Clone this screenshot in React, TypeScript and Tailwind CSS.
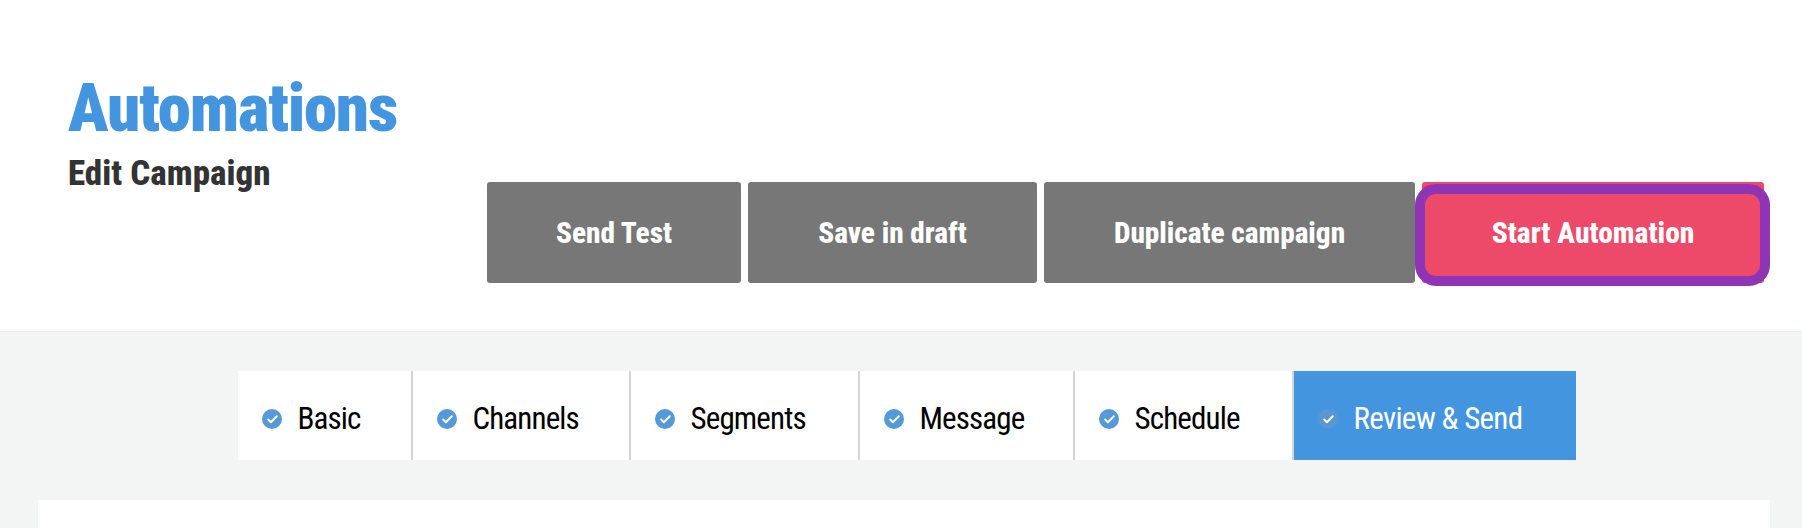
import { Check } from 'lucide-react'

const tabs = [
  { label: 'Basic', width: 'w-[175px]' },
  { label: 'Channels', width: 'w-[218px]' },
  { label: 'Segments', width: 'w-[229px]' },
  { label: 'Message', width: 'w-[215px]' },
  { label: 'Schedule', width: 'w-[219px]' },
]

function TabIcon({ active }: { active?: boolean }) {
  return (
    <span
      className={`w-5 h-5 rounded-full flex items-center justify-center shrink-0 ${
        active ? 'bg-[#5b96d3]' : 'bg-[#5599d8]'
      }`}
    >
      <Check size={13} strokeWidth={3.5} className="text-white" />
    </span>
  )
}

export default function App() {
  return (
    <div className="w-[1802px] h-[528px] overflow-hidden bg-[#f3f5f4] [font-family:Roboto,sans-serif] [font-stretch:75%]">
      {/* Header */}
      <div className="h-[332px] bg-white border-b border-[#eceeed] flex pl-[68px]">
        <div className="w-[419px] shrink-0 pt-[70px]">
          <h1 className="text-[67px] leading-[76px] font-black tracking-[-1.2px] text-[#4495e0]">Automations</h1>
          <p className="text-[35px] leading-[42px] font-extrabold tracking-[0.05px] text-[#333333] mt-[7px]">Edit Campaign</p>
        </div>
        <div className="flex gap-[7px] pt-[182px] shrink-0">
          <ActionButton label="Send Test" width="w-[254px]" />
          <ActionButton label="Save in draft" width="w-[289px]" />
          <ActionButton label="Duplicate campaign" width="w-[371px]" />
          <div className="relative w-[342px] h-[101px] rounded-[3px] bg-[#ed4969] flex items-center justify-center pt-[2px] text-white text-[29.5px] font-extrabold">
            Start Automation
            <div className="absolute left-[-7px] top-[2px] w-[355px] h-[102px] rounded-[21px] border-[10px] border-[#9034b6]" />
          </div>
        </div>
      </div>

      {/* Steps */}
      <div className="pt-[39px] pl-[238px]">
        <div className="flex h-[89px]">
          {tabs.map((tab) => (
            <div
              key={tab.label}
              className={`${tab.width} bg-white border-r-2 border-[#d5d5d5] flex items-center gap-[15.5px] pl-6 pt-[7px] text-[31px] font-[430] tracking-[-0.85px] text-black`}
            >
              <TabIcon />
              {tab.label}
            </div>
          ))}
          <div className="w-[282px] bg-[#4495e0] flex items-center gap-[15.5px] pl-6 pt-[7px] text-[31px] font-[430] tracking-[-0.7px] text-white">
            <TabIcon active />
            Review &amp; Send
          </div>
        </div>
      </div>

      {/* Panel */}
      <div className="mt-[40px] mx-[38px] w-[1732px] h-[100px] bg-white" />
    </div>
  )
}

function ActionButton({ label, width }: { label: string; width: string }) {
  return (
    <button
      className={`${width} h-[101px] rounded-[3px] bg-[#777777] pt-[2px] text-white text-[29.25px] font-extrabold`}
    >
      {label}
    </button>
  )
}
